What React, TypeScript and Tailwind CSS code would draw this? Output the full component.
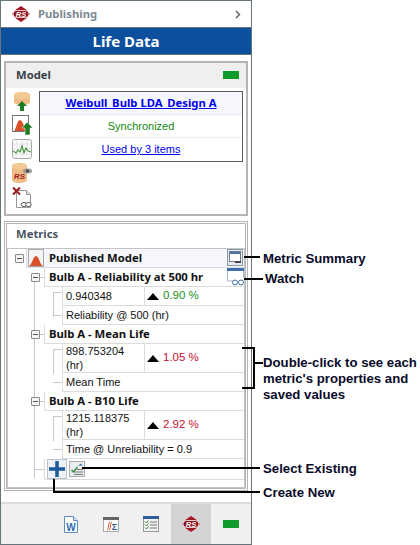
import React from "react";

const bold = "font-['Noto_Sans',sans-serif] text-[11.300px] font-bold";
const plain = "font-['Liberation_Sans',sans-serif] text-[11px]";

const RsLogo = () => (
  <svg width="20" height="16" viewBox="0 0 20 16">
    <polygon points="10,0 15,3.500 19,8 15,12.500 10,16 5,12.500 1,8 5,3.500" fill="#a3151f" />
    <rect x="2" y="4.500" width="16" height="7" rx="3.500" fill="#8f111c" stroke="#fff" strokeWidth="0.800" />
    <text x="10" y="10.800" textAnchor="middle" fontSize="7.500" fontWeight="bold" fontStyle="italic" fill="#fff" fontFamily="Liberation Sans">RS</text>
  </svg>
);

const UpArrow = ({ x, y }: { x: number; y: number }) => (
  <polygon
    transform={`translate(${x} ${y})`}
    points="5,0 10,5 7,5 7,10 3,10 3,5 0,5"
    fill="#1f7a24"
  />
);

const DbUpIcon = () => (
  <svg width="20" height="20" viewBox="0 0 20 20">
    <path d="M2 4c0-4 16-4 16 0v7c0 4-16 4-16 0z" fill="#eebd85" />
    <ellipse cx="10" cy="4.500" rx="8" ry="3.500" fill="#f3c995" />
    <UpArrow x={5} y={10} />
  </svg>
);

const ChartUpIcon = () => (
  <svg width="22" height="20" viewBox="0 0 22 20">
    <rect x="0.500" y="0.500" width="16" height="16" fill="#fff" stroke="#777" />
    <path d="M2 16c2-1 3-11 6-11s4 9 8 11z" fill="#d9502a" />
    <polygon points="15,7 21,13 18,13 18,20 13,20 13,13 10,13" fill="#1f7a24" stroke="#fff" strokeWidth="0.500" />
  </svg>
);

const SparkIcon = () => (
  <svg width="20" height="20" viewBox="0 0 20 20">
    <rect x="0.500" y="0.500" width="19" height="19" rx="2" fill="#fafafa" stroke="#aaa" />
    <path d="M5 1v18M10 1v18M15 1v18M1 5h18M1 10h18M1 15h18" stroke="#ddd" strokeWidth="0.700" />
    <path d="M1 12l3 2 2-3 2 2 2-6 2 7 2-5 2 3 3 1" fill="none" stroke="#4f9a45" strokeWidth="1.200" />
  </svg>
);

const DbRsIcon = () => (
  <svg width="20" height="20" viewBox="0 0 20 20">
    <path d="M0 3c0-4 15-4 15 0v14c0 4-15 4-15 0z" fill="#eebd85" />
    <ellipse cx="7.500" cy="3.500" rx="7.500" ry="3" fill="#f3c995" />
    <text x="7.500" y="16" textAnchor="middle" fontSize="8" fontWeight="bold" fontStyle="italic" fill="#a3151f" fontFamily="Liberation Sans">RS</text>
    <ellipse cx="15.500" cy="8" rx="4.500" ry="2.500" fill="#999" />
    <circle cx="15.500" cy="8" r="1.500" fill="#444" />
  </svg>
);

const RemoveLinkIcon = () => (
  <svg width="21" height="21" viewBox="0 0 21 21">
    <path d="M4.500 3.500h10l4 4v13h-14z" fill="#fff" stroke="#999" />
    <path d="M14.500 3.500v4h4" fill="#ddd" stroke="#999" />
    <path d="M1 0.500l7 7M8 0.500l-7 7" stroke="#9b1c1c" strokeWidth="2" />
    <ellipse cx="12" cy="17.500" rx="2.800" ry="2" fill="#fff" stroke="#555" />
    <ellipse cx="16.500" cy="17.500" rx="2.800" ry="2" fill="#fff" stroke="#555" />
  </svg>
);

const SummaryIcon = () => (
  <svg width="16" height="17" viewBox="0 0 16 17">
    <rect x="0.500" y="0.500" width="15" height="16" fill="#e4e8ee" stroke="#8a9aa8" />
    <rect x="2.500" y="2.500" width="11" height="10" fill="#fff" stroke="#6f7f90" />
    <rect x="3" y="3" width="10" height="2" fill="#4a6f99" />
    <path d="M8 13h6" stroke="#444" strokeWidth="2" />
  </svg>
);

const WatchIcon = () => (
  <svg width="17" height="18" viewBox="0 0 17 18">
    <path d="M0.500 3v10h6M16.500 3v7" fill="none" stroke="#a8bacf" />
    <rect x="0" y="0" width="17" height="3" fill="#3f6fa8" />
    <circle cx="8" cy="14.500" r="2.500" fill="#fff" stroke="#3f6fa8" />
    <circle cx="14" cy="14.500" r="2.500" fill="#fff" stroke="#3f6fa8" />
  </svg>
);

const BellIcon = () => (
  <svg width="16" height="18" viewBox="0 0 16 18">
    <rect x="0.500" y="0.500" width="15" height="17" fill="#f4f4f4" stroke="#aaa" />
    <path d="M1 17c3-1 4-10 7-10s4 9 7 10z" fill="#d9502a" />
  </svg>
);

const SelectExistingIcon = () => (
  <svg width="16" height="16" viewBox="0 0 16 16">
    <rect x="0.500" y="0.500" width="15" height="15" fill="#e9edf0" stroke="#a5adb3" />
    <path d="M5 11h9M5 13.500h9M8 8.500h6" stroke="#777" />
    <path d="M2.500 9l2 2 4-5" fill="none" stroke="#3d8a3d" strokeWidth="1.500" />
    <path d="M9 5l3-2.500 1.500 2z" fill="#3f6fa8" />
  </svg>
);

const WordIcon = () => (
  <svg width="14" height="17" viewBox="0 0 14 17">
    <path d="M0.500 0.500h9l4 4v12h-13z" fill="#fff" stroke="#5c8ec4" />
    <path d="M9.500 0.500v4h4" fill="#dbe7f3" stroke="#5c8ec4" />
    <text x="7" y="14.500" textAnchor="middle" fontSize="10" fontWeight="bold" fill="#2b6cb0" fontFamily="Liberation Sans">W</text>
  </svg>
);

const FormulaIcon = () => (
  <svg width="16" height="15" viewBox="0 0 16 15">
    <rect x="0.500" y="0.500" width="15" height="14" fill="#fff" stroke="#aaa" />
    <rect x="0" y="0" width="16" height="3" fill="#666" />
    <path d="M7 5c-2 0-1 8-3 8M9 5c-2 0-1 8-3 8" fill="none" stroke="#d9502a" />
    <text x="11.500" y="13" textAnchor="middle" fontSize="9" fontWeight="bold" fill="#2f5f99" fontFamily="Liberation Sans">Σ</text>
  </svg>
);

const ChecklistIcon = () => (
  <svg width="16" height="16" viewBox="0 0 16 16">
    <rect x="0.500" y="1.500" width="15" height="14" fill="#f1f1f1" stroke="#999" />
    <rect x="0" y="0" width="16" height="3" fill="#2f5f99" />
    <path d="M7 6h7M7 9h7M7 12h7" stroke="#777" />
    <path d="M2 5.500l1.500 1.500 2-2.500M2 8.500l1.500 1.500 2-2.500M2 11.500l1.500 1.500 2-2.500" fill="none" stroke="#3d8a3d" />
  </svg>
);

const Expander = () => (
  <span className="flex h-[9px] w-[9px] items-center justify-center rounded-[1px] border border-[#8a8a8a] bg-[#f4f4f4]">
    <span className="h-px w-[5px] bg-[#555]" />
  </span>
);

const Metric = ({
  title,
  value,
  change,
  changeClass,
  label,
  tall,
}: {
  title: string;
  value: React.ReactNode;
  change: string;
  changeClass: string;
  label: string;
  tall?: boolean;
}) => (
  <div className="relative">
    <div className="relative ml-[36px]">
      <span className="absolute left-[-13px] top-[5px]">
        <Expander />
      </span>
      <span className="absolute left-[-4px] top-[9px] h-px w-[4px] bg-[#c8c8c8]" />
      <div className={`flex h-[19px] items-center border-b border-l border-[#dcdcdc] pl-[4px] text-[#111] ${bold}`}>
        {title}
      </div>
    </div>
    <div className={`relative ml-[54px] flex border-b border-[#dcdcdc] ${tall ? "h-[29px]" : "h-[19px]"}`}>
      <span className="absolute left-[-9px] top-[5px] h-[25px] w-px bg-[#c8c8c8]" />
      <span className="absolute left-[-9px] top-[5px] h-px w-[9px] bg-[#c8c8c8]" />
      <div className={`flex w-[83px] items-center border-x border-[#dcdcdc] pl-[3px] leading-[14px] text-[#111] ${plain}`}>
        {value}
      </div>
      <div className="flex flex-1 items-center pl-[2px] font-['Liberation_Sans',sans-serif] text-[11.500px]">
        <span className="mr-[4px] h-0 w-0 border-x-[6px] border-b-[7px] border-x-transparent border-b-black" />
        <span className={changeClass}>{change}</span>
      </div>
    </div>
    <div className={`relative ml-[54px] flex h-[19px] items-center border-b border-l border-[#dcdcdc] pl-[3px] text-[#111] ${plain}`}>
      <span className="absolute left-[-10px] top-[9px] h-px w-[9px] bg-[#c8c8c8]" />
      {label}
    </div>
  </div>
);

const CalloutLine = ({ className }: { className: string }) => <span className={`absolute bg-black ${className}`} />;

const Callout = ({ className, children }: { className: string; children: React.ReactNode }) => (
  <div className={`absolute whitespace-nowrap font-['Liberation_Sans',sans-serif] text-[13.200px] font-bold leading-[16px] text-[#0a0a2a] ${className}`}>
    {children}
  </div>
);

export default function App() {
  return (
    <div className="relative h-[545px] w-[420px] overflow-hidden bg-white">
      <div className="flex h-[545px] w-[252px] flex-col border border-[#66757c]">
        <header className="flex h-[26px] shrink-0 items-center pl-[10px] pr-[10px]">
          <RsLogo />
          <span className={`ml-[7px] text-[#7d8894] ${bold}`}>Publishing</span>
          <svg className="ml-auto" width="6" height="9" viewBox="0 0 6 9">
            <path d="M1 1l3.500 3.500L1 8" fill="none" stroke="#666" strokeWidth="1.500" />
          </svg>
        </header>
        <div className="flex h-[28px] shrink-0 items-center justify-center border-y border-[#66757c] bg-[#0c4f9c] font-['Noto_Sans',sans-serif] text-[15px] font-bold text-white">
          Life Data
        </div>

        <div className="flex flex-1 flex-col bg-white px-[3px] pt-[6px]">
          <section className="h-[155px] border-2 border-[#b4b4b4]">
            <div className="flex h-[25px] items-center justify-between bg-[#efefef] pb-[1px] pl-[10px] pr-[7px]">
              <span className={`text-[#3a3f45] ${bold}`}>Model</span>
              <span className="h-[8px] w-[16px] bg-[#0f9a2c]" />
            </div>
            <div className="flex pl-[6px] pr-[3px] pt-[3px]">
              <div className="flex w-[27px] shrink-0 flex-col gap-[4px]">
                <DbUpIcon />
                <ChartUpIcon />
                <SparkIcon />
                <DbRsIcon />
                <RemoveLinkIcon />
              </div>
              <div className="h-[71px] flex-1 border border-[#5a5a5a] text-center">
                <div className={`flex h-[23px] items-center justify-center border-b border-[#e8e8f6] bg-[#f5f7fd] text-[#0000ee] underline ${bold}`}>
                  Weibull_Bulb LDA_Design A
                </div>
                <div className={`flex h-[23px] items-center justify-center border-b border-[#e8f0ec] text-[#118a11] ${plain}`}>
                  Synchronized
                </div>
                <div className={`flex h-[23px] items-center justify-center text-[#0000ee] underline ${plain}`}>Used by 3 items</div>
              </div>
            </div>
          </section>

          <section className="mt-[5px] flex h-[270px] flex-col border-[3px] border-double border-[#b4b4b4]">
            <div className={`flex h-[24px] shrink-0 items-center pb-[3px] pl-[9px] text-[#4a5560] ${bold}`}>Metrics</div>
            <div className="flex-1 border border-[#c4c4c4]">
              <div className={`relative ml-[18px] flex h-[19px] items-center border-b border-l border-[#dcdcdc] bg-[#f5f7fd] pl-[1px] text-[#111] ${bold}`}>
                <span className="absolute left-[-12px] top-[5px]">
                  <Expander />
                </span>
                <BellIcon />
                <span className="ml-[5px]">Published Model</span>
                <span className="absolute right-[1px] top-0">
                  <SummaryIcon />
                </span>
              </div>
              <div className="relative">
                <span className="absolute left-[26px] top-[9px] h-[201px] w-px bg-[#c8c8c8]" />
                <div className="relative">
                  <Metric
                    title="Bulb A - Reliability at 500 hr"
                    value="0.940348"
                    change="0.90 %"
                    changeClass="text-[#16901a]"
                    label="Reliability @ 500 (hr)"
                  />
                  <span className="absolute right-0 top-0">
                    <WatchIcon />
                  </span>
                </div>
                <Metric
                  title="Bulb A - Mean Life"
                  value={<span>898.753204<br />(hr)</span>}
                  change="1.05 %"
                  changeClass="text-[#c8102e]"
                  label="Mean Time"
                  tall
                />
                <Metric
                  title="Bulb A - B10 Life"
                  value={<span>1215.118375<br />(hr)</span>}
                  change="2.92 %"
                  changeClass="text-[#c8102e]"
                  label="Time @ Unreliability = 0.9"
                  tall
                />
                <div className="relative ml-[36px] flex h-[21px] items-center gap-[2px] border-b border-l border-[#dcdcdc] pl-[2px]">
                  <span className="absolute left-[-10px] top-[10px] h-px w-[10px] bg-[#c8c8c8]" />
                  <span className="flex h-[20px] w-[20px] items-center justify-center border border-[#b8c2cc] bg-[#eef2f6]">
                    <svg width="16" height="16" viewBox="0 0 16 16">
                      <path d="M8 0v16M0 8h16" stroke="#1d5a9a" strokeWidth="3.500" />
                    </svg>
                  </span>
                  <SelectExistingIcon />
                </div>
              </div>
            </div>
          </section>
        </div>

        <footer className="flex h-[42px] shrink-0 items-center border-t-2 border-[#dcdcdc] bg-[#f0f0f0] pl-[50px]">
          <span className="flex w-[40px] justify-center"><WordIcon /></span>
          <span className="flex w-[40px] justify-center"><FormulaIcon /></span>
          <span className="flex w-[40px] justify-center"><ChecklistIcon /></span>
          <span className="flex h-full w-[40px] items-center justify-center bg-[#d4d4d4]"><RsLogo /></span>
          <span className="flex w-[40px] justify-center"><span className="h-[8px] w-[16px] bg-[#0f9a2c]" /></span>
        </footer>
      </div>

      {/* callouts over the panel */}
      <CalloutLine className="left-[244px] top-[256px] h-[2px] w-[16px]" />
      <CalloutLine className="left-[244px] top-[278px] h-[2px] w-[19px]" />
      <CalloutLine className="left-[242px] top-[347px] h-[2px] w-[12px]" />
      <CalloutLine className="left-[242px] top-[387px] h-[2px] w-[12px]" />
      <CalloutLine className="left-[253px] top-[347px] h-[42px] w-[2px]" />
      <CalloutLine className="left-[254px] top-[362px] h-[2px] w-[9px]" />
      <CalloutLine className="left-[82px] top-[467px] h-[2px] w-[178px]" />
      <CalloutLine className="left-[53px] top-[491px] h-[2px] w-[207px]" />
      <CalloutLine className="left-[53px] top-[479px] h-[13px] w-[2px]" />

      <Callout className="left-[263px] top-[251px]">Metric Summary</Callout>
      <Callout className="left-[265px] top-[271px]">Watch</Callout>
      <Callout className="left-[263px] top-[355px]">
        Double-click to see each
        <br />
        metric's properties and
        <br />
        saved values
      </Callout>
      <Callout className="left-[263px] top-[461px]">Select Existing</Callout>
      <Callout className="left-[263px] top-[485px]">Create New</Callout>
    </div>
  );
}
